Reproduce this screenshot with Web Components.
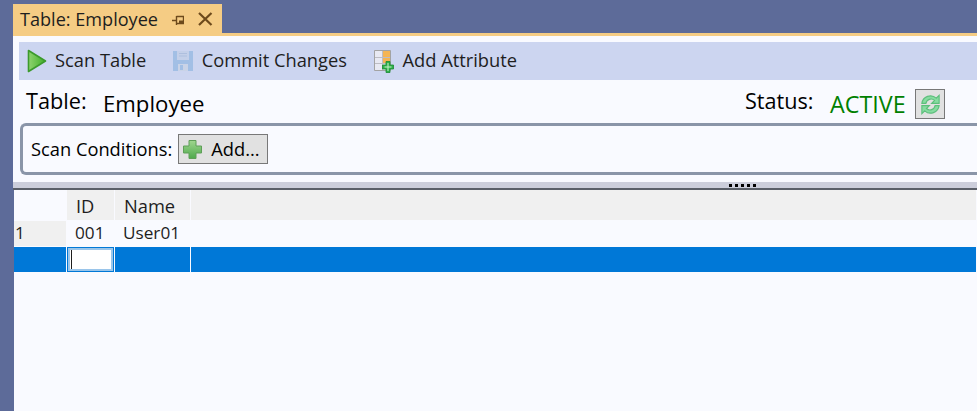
<!DOCTYPE html>
<html><head><meta charset="utf-8"><style>
html,body{margin:0;padding:0;height:100%;overflow:hidden}
body{width:977px;height:411px;background:#5d6b99;font-family:"Open Sans","Noto Sans",sans-serif;color:#1e1e1e}
</style></head><body>
<doc-window>
  <doc-tab slot="tab">Table: Employee</doc-tab>
  <tool-bar>
    <tool-button icon="play">Scan Table</tool-button>
    <tool-button icon="save">Commit Changes</tool-button>
    <tool-button icon="attr">Add Attribute</tool-button>
  </tool-bar>
  <table-info></table-info>
  <scan-conditions></scan-conditions>
  <split-grip></split-grip>
  <data-grid></data-grid>
</doc-window>
<script>
const ICONS={
play:`<svg width="20" height="24" viewBox="0 0 20 24"><defs><linearGradient id="p" x1="0" x2="1" y1="0" y2="0"><stop offset="0" stop-color="#8fd36f"/><stop offset="1" stop-color="#3fae27"/></linearGradient></defs><path d="M1.500 1.500 18.500 12 1.500 22.500Z" fill="url(#p)" stroke="#3c9a2c" stroke-width="1.600" stroke-linejoin="round"/></svg>`,
save:`<svg width="22" height="22" viewBox="0 0 22 22" opacity=".85"><path d="M1 1H21V21H1Z" fill="#9bbce4"/><path d="M5 1H17V10H5Z" fill="#c3d0e8"/><path d="M7 3.500H15M7 6H15" stroke="#a9bcdc" stroke-width="1"/><path d="M6 14H16V21H6Z" fill="#c9d3e6"/><path d="M8 15H11V20H8Z" fill="#9bbce4"/></svg>`,
attr:`<svg width="22" height="24" viewBox="0 0 22 24"><path d="M1.500 1.500H17.500V21.500H1.500Z" fill="#e8e9f2" stroke="#a3a3a3"/><path d="M9.500 2H17V15H9.500Z" fill="#f5b553"/><path d="M2 8.500H17M2 14.500H17M9.500 2V21" stroke="#bdbdc4" stroke-width="1"/><path d="M13 12.500h4v3.500h3.500v4H17v3.500h-4V20H9.500v-4H13Z" fill="#2fb14a" stroke="#1c8a34" stroke-width=".8"/><path d="M14.500 14h1v3.500h3v1h-3V22h-1v-3.500h-3v-1h3Z" fill="#c9f0c9"/></svg>`
};
function def(name,css,html){
  customElements.define(name,class extends HTMLElement{
    constructor(){super();const s=this.attachShadow({mode:"open"});s.innerHTML=`<style>${css}</style>${typeof html==="function"?html(this):html}`;}
  });
}
def("doc-window",`:host{display:flex;flex-direction:column;height:411px;padding:4px 0 0 13px;box-sizing:border-box}
 .tabs{height:29px;display:flex}
 .body{flex:1;background:#f9faff;border-top:3px solid #f5cc84;display:flex;flex-direction:column;min-height:0}`,
 `<div class="tabs"><slot name="tab"></slot></div><div class="body"><slot></slot></div>`);
def("doc-tab",`:host{display:flex;align-items:center;width:209px;height:29px;box-sizing:border-box;padding:0 0 0 7px;background:#f5cc84;font-size:18.100px;color:#1e1e1e;white-space:nowrap}
 .pin{margin:2px 0 0 14px}.x{margin:1px 0 0 13px}svg{display:block}`,
 `<slot></slot><svg class="pin" width="12" height="10" viewBox="0 0 12 10"><path d="M0 5.500H4M4.500 1V10M4.500 1.500H11.500V8.500H4.500" fill="none" stroke="#6d4a1c" stroke-width="1.400"/><path d="M7 5.500H12V9H7Z" fill="#6d4a1c"/></svg><svg class="x" width="16" height="14" viewBox="0 0 16 14"><path d="M2 1 14.500 13M14.500 1 2 13" stroke="#6d4a1c" stroke-width="2.200"/></svg>`);
def("tool-bar",`:host{display:flex;align-items:center;height:38px;margin:6px 0 0 6px;background:#ccd5f0;padding-left:6px;color:#1e1e1e}`,`<slot></slot>`);
def("tool-button",`:host{display:flex;align-items:center;font-size:18.300px;white-space:nowrap;margin-right:25.500px}
 .i{width:23px;height:24px;display:flex;align-items:center;justify-content:center;margin-right:7px}
 .t{margin-bottom:4px}
 svg{display:block}`,
 h=>`<span class="i">${ICONS[h.getAttribute("icon")]}</span><span class="t"><slot></slot></span>`);
def("table-info",`:host{display:flex;height:43px;box-sizing:border-box;color:#000;line-height:30px;white-space:nowrap}
 .l{margin:6px 0 0 13px;width:77px;font-size:21.700px}.n{margin-top:9px;font-size:22.200px}.sp{flex:1}
 .s{margin-top:6px;width:85px;font-size:21.600px}.a{margin-top:9px;color:#008000;font-size:23.300px;width:85px}
 .r{margin:9px 32px 0 0;width:30px;height:30px;box-sizing:border-box;border:1px solid #787878;background:#e1e1e1;display:flex;align-items:center;justify-content:center}`,
 `<span class="l">Table:</span><span class="n">Employee</span><span class="sp"></span><span class="s">Status:</span><span class="a">ACTIVE</span><span class="r"><svg width="23" height="23" viewBox="2 1 18 20"><path d="M3.500 10A7.500 7.500 0 0 1 16 5.500L18.500 3V10H12L14.500 7.500A4.500 4.500 0 0 0 7 10Z" fill="#86dca0" stroke="#5dbf7c"/><path d="M18.500 12A7.500 7.500 0 0 1 6 16.500L3.500 19V12H10L7.500 14.500A4.500 4.500 0 0 0 15 12Z" fill="#86dca0" stroke="#5dbf7c"/></svg></span>`);
def("scan-conditions",`:host{display:flex;align-items:center;height:52px;box-sizing:border-box;margin-left:7px;border:solid #8a95a8;border-width:3px 0 3px 3px;border-radius:6px 0 0 6px;padding-left:8px;font-size:18.300px;color:#000;white-space:nowrap}
 .lb{margin-bottom:2px}
 .b{margin-left:6px;width:90px;height:30px;box-sizing:border-box;border:1px solid #787878;background:#e1e1e1;display:flex;align-items:center;font-size:18.300px;padding-left:3px}
 svg{margin-right:8px;display:block}`,
 `<span class="lb">Scan Conditions:</span><span class="b"><svg width="21" height="21" viewBox="0 0 21 21"><defs><linearGradient id="g" x1="0" x2="0" y1="0" y2="1"><stop offset="0" stop-color="#9fd68f"/><stop offset="1" stop-color="#4fa94c"/></linearGradient></defs><path d="M7 1.500H14V7H19.500V14H14V19.500H7V14H1.500V7H7Z" fill="url(#g)" stroke="#5f9f58" stroke-linejoin="round"/></svg><span class="lb">Add...</span></span>`);
def("split-grip",`:host{display:block;height:15px;box-sizing:border-box;position:relative;background:linear-gradient(#f9faff 0 7px,#cccedb 7px);border-bottom:2px solid #5a5f68}
 i{position:absolute;top:9px;width:3px;height:3px;background:#000}`,
 [0,1,2,3,4].map(n=>`<i style="left:${716+n*6}px"></i>`).join(""));
def("data-grid",`:host{display:grid;flex:1;align-content:start;grid-template-columns:53px 48px 76px 1fr;grid-template-rows:31px 26px 26px;border-left:1px solid #5d6b99;font-size:18.300px;color:#1e1e1e;line-height:1}
 div{display:flex;align-items:center;box-sizing:border-box;white-space:nowrap;border-right:1px solid #f9faff;border-bottom:1px solid #f9faff}
 .h{background:#f0f0f0;padding-top:3px}.c{background:#f9faff}.rh{background:#f0f0f0;font-size:17.200px;padding:0 0 2px 1px}
 .sel{background:#0078d7}.ed{background:#0078d7;padding:1px}
 .ed span{display:block;position:relative;width:100%;height:100%;box-sizing:border-box;background:#fff;border:2px solid #9ac5ea}
 .ed span::before{content:"";position:absolute;left:1px;top:0;bottom:0;width:1px;background:#1e1e1e}
 .id{padding-left:9px}.nm{padding-left:9px}.uid,.uu{padding:0 0 2px 8px;font-size:17.200px}`,
 `<div class="c"></div><div class="h id">ID</div><div class="h nm">Name</div><div class="h"></div>
  <div class="rh">1</div><div class="c uid">001</div><div class="c uu">User01</div><div class="c"></div>
  <div class="sel"></div><div class="ed"><span></span></div><div class="sel"></div><div class="sel"></div>`);
</script>
</body></html>
